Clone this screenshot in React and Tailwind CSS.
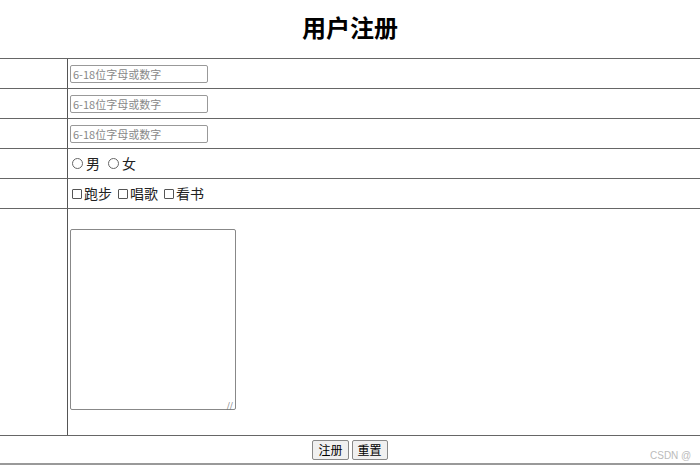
export default function App() {
  const f = { fontFamily: '"Noto Sans CJK SC", "Microsoft YaHei", sans-serif' };
  const Row = ({ h, children }) => (
    <div className="flex border-b border-[#666]" style={{ height: h }}>
      <div className="w-[68px] shrink-0 border-r border-[#555]"></div>
      <div className="flex-1 pl-[2px]">{children}</div>
    </div>
  );
  const Inp = () => (
    <div className="flex h-full items-center">
      <div className="w-[138px] h-[18px] border border-[#999] rounded-[2px] text-[11px] text-[#888] pl-[2px] leading-[16px]">6-18位字母或数字</div>
    </div>
  );
  return (
    <div className="w-[700px] h-[470px] bg-white relative overflow-hidden" style={f}>
      <div className="h-[51px] flex items-center justify-center text-[24px] font-bold text-black pt-[2px]">用户注册</div>
      <div className="border-t border-[#666] mt-[7px]">
        <Row h={30}><Inp /></Row>
        <Row h={30}><Inp /></Row>
        <Row h={30}><Inp /></Row>
        <Row h={30}>
          <div className="flex h-full items-center text-[14px] text-[#222] gap-[1px]">
            <span className="w-[11px] h-[11px] rounded-full border border-[#666] mx-[2px]"></span>男
            <span className="w-[11px] h-[11px] rounded-full border border-[#666] ml-[7px] mr-[2px]"></span>女
          </div>
        </Row>
        <Row h={30}>
          <div className="flex h-full items-center text-[14px] text-[#222]">
            <span className="w-[10px] h-[10px] border border-[#555] rounded-[1px] mx-[2px]"></span>跑步
            <span className="w-[10px] h-[10px] border border-[#555] rounded-[1px] ml-[6px] mr-[2px]"></span>唱歌
            <span className="w-[10px] h-[10px] border border-[#555] rounded-[1px] ml-[6px] mr-[2px]"></span>看书
          </div>
        </Row>
        <Row h={227}>
          <div className="pt-[20px]">
            <div className="w-[166px] h-[181px] border border-[#888] rounded-[2px] relative">
              <span className="absolute right-[2px] bottom-0 text-[8px] text-[#666] leading-none">//</span>
            </div>
          </div>
        </Row>
        <div className="h-[29px] flex items-center justify-center gap-[3px] border-b-2 border-[#999]">
          <div className="px-[5px] h-[20px] border border-[#888] bg-[#f0f0f0] rounded-[2px] text-[12px] leading-[18px] text-black">注册</div>
          <div className="px-[5px] h-[20px] border border-[#888] bg-[#f0f0f0] rounded-[2px] text-[12px] leading-[18px] text-black">重置</div>
        </div>
      </div>
      <div className="absolute left-[650px] top-[448px] text-[10px] text-[#bbb]" style={{ fontFamily: '"Liberation Sans", sans-serif' }}>CSDN @</div>
    </div>
  );
}
